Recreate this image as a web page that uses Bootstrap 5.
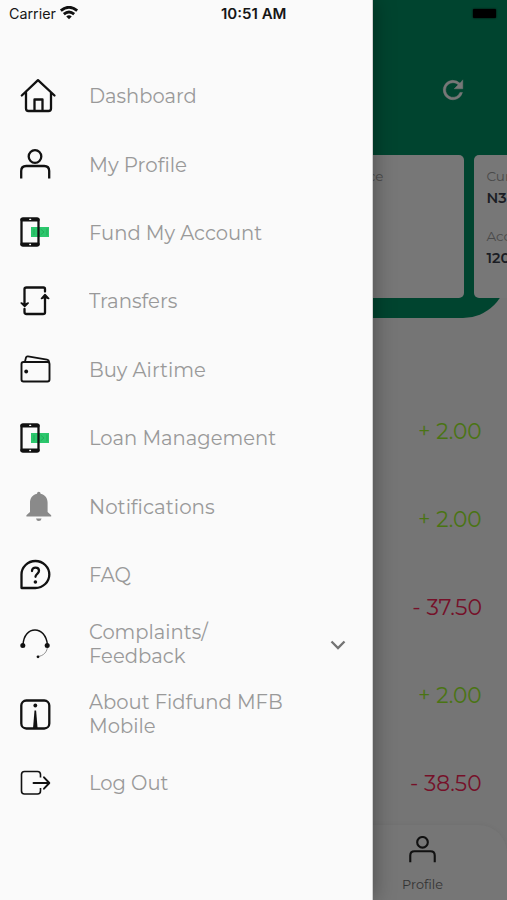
<!DOCTYPE html>
<html lang="en">
<head>
<meta charset="utf-8">
<meta name="viewport" content="width=device-width, initial-scale=1">
<title>Fidfund MFB Mobile</title>
<link href="https://cdn.jsdelivr.net/npm/bootstrap@5.3.0/dist/css/bootstrap.min.css" rel="stylesheet">
<style>
body{font-family:Montserrat,Inter,"Open Sans",sans-serif;background:#757575}
.phone{width:507px;height:900px;background:#757575}
.hero{height:318px;background:#00442f;border-bottom-right-radius:44px;padding-top:79px}
.refresh{height:22px;margin-right:43px}
.accounts{margin-top:54px;height:143px;gap:10px;padding-left:154px}
.account{background:#777;border-radius:5px;width:310px;padding:11px 12.5px;color:#4a4a4a;font-size:13.5px;line-height:20px;white-space:nowrap;flex:none}
.account b{font-weight:600;color:#1b1d24;font-size:14.5px;line-height:22px;margin:1px 0 17px}
.account-label{width:217px}
.entries{padding-top:69px;height:507px;padding-right:25px}
.entry{height:88px;font-size:22px}
.credit{color:#4a7413}.debit{color:#761029}
.tabs-bar{height:75px;background:#767676;border-top-right-radius:28px;box-shadow:0 -1px 4px rgba(0,0,0,.04);padding-left:387px}
.tab-item{width:71px;font-size:12.8px;color:#333;padding-top:10.5px}
.tab-item svg{margin-bottom:12.5px;stroke-width:2.5;stroke-linecap:butt}
.drawer{width:373px;background:#fafafa;border-right:1px solid #d0d0d0;box-shadow:1px 0 20px rgba(0,0,0,.34);padding-top:61.5px}
.entry-row{height:68.4px;padding-left:17px;color:#999;font-size:20px;font-weight:400;line-height:24.4px}
.entry-row.tall{height:70px}
.entry-row.tall+.entry-row:last-child{height:67px}
.entry-row svg{width:40px;height:40px;flex:none;margin-right:32px;overflow:visible}
.fit{display:inline-block;white-space:nowrap;transform-origin:left center}
.right .fit{transform-origin:right center}
.entry-row>span{padding-top:1.4px}
.status{height:27px;font-family:Inter,sans-serif;font-size:14px;color:#161616}
.status .carrier{padding-left:9px;width:221px}
.status .clock{font-weight:600;width:252px}
.battery{width:23px;height:9px;background:#000;border-radius:1px;box-shadow:0 0 2px #000}
svg{fill:none;stroke:#111;stroke-width:2.3;stroke-linecap:round;stroke-linejoin:round}
</style>
<script src="https://cdn.jsdelivr.net/npm/bootstrap@5.3.0/dist/js/bootstrap.bundle.min.js"></script>
</head>
<body>
<div class="phone position-relative overflow-hidden">
  <main>
    <section class="hero">
      <div class="refresh d-flex justify-content-end">
        <svg width="22" height="22" viewBox="3 3 18 18"><path fill="#777" stroke="#777" stroke-width=".4" d="M17.650 6.350A8 8 0 1 0 19.730 14h-2.080A6 6 0 1 1 12 6c1.660 0 3.140.690 4.220 1.780L13 11h7V4z"/></svg>
      </div>
      <div class="accounts d-flex">
        <div class="account"><div class="account-label text-end">Balance</div></div>
        <div class="account"><div>Cur</div><b class="d-block">N3</b><div>Acc</div><b class="d-block">120</b></div>
      </div>
    </section>
    <section class="entries right">
      <div class="entry d-flex align-items-center justify-content-end credit"><span class="fit" data-w="64">+ 2.00</span></div>
      <div class="entry d-flex align-items-center justify-content-end credit"><span class="fit" data-w="64">+ 2.00</span></div>
      <div class="entry d-flex align-items-center justify-content-end debit"><span class="fit" data-w="70">- 37.50</span></div>
      <div class="entry d-flex align-items-center justify-content-end credit"><span class="fit" data-w="64">+ 2.00</span></div>
      <div class="entry d-flex align-items-center justify-content-end debit"><span class="fit" data-w="72">- 38.50</span></div>
    </section>
    <footer class="tabs-bar">
      <div class="tab-item d-flex flex-column align-items-center">
        <svg width="27" height="27" viewBox="4 4 32 32"><circle cx="20" cy="11.500" r="6.300"/><path d="M5.500 35V27q0-5 5-5h19q5 0 5 5v8"/></svg>
        <span class="text-nowrap">Profile</span>
      </div>
    </footer>
  </main>

  <nav class="drawer position-absolute top-0 start-0 h-100">
    <div class="entry-row d-flex align-items-center"><svg viewBox="0 0 40 40"><path d="M4.800 19.500 21 4.200l16.500 15.300M9 16.500v16q0 2.500 2.500 2.500h20q2.500 0 2.500-2.500v-16M17.500 34.500V23.500h8v11"/></svg><span class="fit" data-w="108">Dashboard</span></div>
    <div class="entry-row d-flex align-items-center"><svg viewBox="0 0 40 40"><circle cx="18" cy="12.500" r="6.300"/><path stroke-linecap="butt" d="M4.200 34.500V27q0-5 5-5h18q5 0 5 5v7.500"/></svg><span class="fit" data-w="98">My Profile</span></div>
    <div class="entry-row d-flex align-items-center"><svg viewBox="0 0 40 40"><path fill="#2cc76d" stroke="none" d="M14 15h18v10H14z"/><path stroke="#20ad58" stroke-width="1" d="M24 17.500l3 2.500-3 2.500M17 17.500v5M30 17v6"/><rect x="4.500" y="6.500" width="17" height="27" rx="1.500"/><path stroke-width="3.400" d="M5 7.700h16M5 32.300h16"/><path stroke="#fff" stroke-width="1.300" d="M12.700 7.300h1M12.800 32.500h.7"/></svg><span class="fit" data-w="173">Fund My Account</span></div>
    <div class="entry-row d-flex align-items-center"><svg viewBox="0 0 40 40"><path d="M28 10.500V8q0-1.500-1.500-1.500h-17Q7.500 6.500 7.500 8v15M7.500 28V31q0 2 2 2h16.500q2 0 2-1.500V16"/><path fill="#111" stroke-width="1.600" d="m4.200 22 3.500 1.500L11.200 22l-3.500 3.500zM24.500 17.500 28 13.500l3.700 4-3.700-1.300z"/></svg><span class="fit" data-w="88.500">Transfers</span></div>
    <div class="entry-row d-flex align-items-center"><svg viewBox="0 0 40 40"><rect x="4.500" y="13" width="28" height="19.500" rx="2" stroke-width="1.900"/><path stroke-width="1.800" d="M8 12.500 9 8.500q.4-1.400 2-1.100l19 3.300q2 .4 2 2"/><circle cx="9.200" cy="22.500" r="1.900" fill="#111" stroke="none"/></svg><span class="fit" data-w="116.500">Buy Airtime</span></div>
    <div class="entry-row d-flex align-items-center"><svg viewBox="0 0 40 40"><path fill="#2cc76d" stroke="none" d="M14 15h18v10H14z"/><path stroke="#20ad58" stroke-width="1" d="M24 17.500l3 2.500-3 2.500M17 17.500v5M30 17v6"/><rect x="4.500" y="6.500" width="17" height="27" rx="1.500"/><path stroke-width="3.400" d="M5 7.700h16M5 32.300h16"/><path stroke="#fff" stroke-width="1.300" d="M12.700 7.300h1M12.800 32.500h.7"/></svg><span class="fit" data-w="187.500">Loan Management</span></div>
    <div class="entry-row d-flex align-items-center"><svg viewBox="0 0 40 40"><path fill="#8a8a8a" stroke="none" d="M20 7.800q0-2 1.800-2t1.800 2c4.800 1 7 4.700 7 9V26l3.600 3.200v1.300H9.400v-1.300L13 26v-9.200c0-4.300 2.200-8 7-9zM19 32.500h5.600q-.5 2.500-2.800 2.500T19 32.500z"/></svg><span class="fit" data-w="126">Notifications</span></div>
    <div class="entry-row d-flex align-items-center"><svg viewBox="0 0 40 40"><path d="M4.500 34V20.500a13.900 13.500 0 1 1 13.900 13.500z"/><path d="M15 17c0-4.600 7-4.200 7-.2 0 3-3.500 3-3.500 6"/><circle cx="18.400" cy="28" r="1.800" fill="#111" stroke="none"/></svg><span class="fit" data-w="42">FAQ</span></div>
    <div class="entry-row tall d-flex align-items-center"><svg viewBox="0 0 40 40"><path stroke-width="1.500" d="M6 21C6.500 11 12 6 18 6s11.500 5 12.500 15"/><path stroke="#777" stroke-width=".8" d="M30.500 22c0 6-4 10-9.500 10.500"/><g fill="#111" stroke="none"><circle cx="5.800" cy="21.500" r="2.500"/><circle cx="30.200" cy="21.500" r="2.500"/><circle cx="21" cy="32.800" r="1.400"/></g></svg><span><span class="fit" data-w="119">Complaints/</span><br><span class="fit" data-w="96">Feedback</span></span>
      <svg class="ms-auto me-0" viewBox="0 0 40 40"><path stroke="#737373" stroke-width="2.300" stroke-linecap="butt" stroke-linejoin="miter" d="m-.5 17.500 6.500 6.500 6.500-6.500"/></svg></div>
    <div class="entry-row tall d-flex align-items-center"><svg viewBox="0 0 40 40"><rect x="4.300" y="6.500" width="28" height="28" rx="5"/><circle cx="18.300" cy="11.500" r="1.900" fill="#111" stroke="none"/><path fill="#111" stroke="none" d="M17.500 16.500h1.600l1.500 18h-4.600z"/></svg><span><span class="fit" data-w="193.500">About Fidfund MFB</span><br><span class="fit" data-w="66.500">Mobile</span></span></div>
    <div class="entry-row d-flex align-items-center"><svg viewBox="0 0 40 40"><path stroke-width="1.600" stroke-linecap="butt" d="M23.500 15.500v-3q0-3-3-3H7.500q-3 0-3 3v16.500q0 3 3 3h13q3 0 3-3V26"/><path stroke-width="1.900" d="M16.500 21H32M27 15.300l5.300 5.700-5.300 5.700"/></svg><span class="fit" data-w="79">Log Out</span></div>
  </nav>

  <header class="status position-absolute top-0 start-0 w-100 d-flex align-items-center">
    <div class="carrier d-flex align-items-center"><span class="fit" data-w="47">Carrier</span>
      <svg class="ms-1" width="20" height="15" viewBox="-1 1 22 15"><path stroke-width="3.100" stroke-linecap="butt" d="M1 5.300Q10-2 19 5.300M4.300 9.200Q10 4.400 15.700 9.200"/><path fill="#111" stroke="none" d="M7 11.700Q10 9.300 13 11.700L10 14.800z"/></svg></div>
    <div class="clock"><span class="fit" data-w="65.5">10:51 AM</span></div>
    <div class="battery"></div>
  </header>
</div>
<script>
// Stretch each label horizontally to its design width
document.querySelectorAll('.fit').forEach(function (el) {
  el.style.transform = 'scaleX(' + el.dataset.w / el.offsetWidth + ')';
});
</script>
</body>
</html>
